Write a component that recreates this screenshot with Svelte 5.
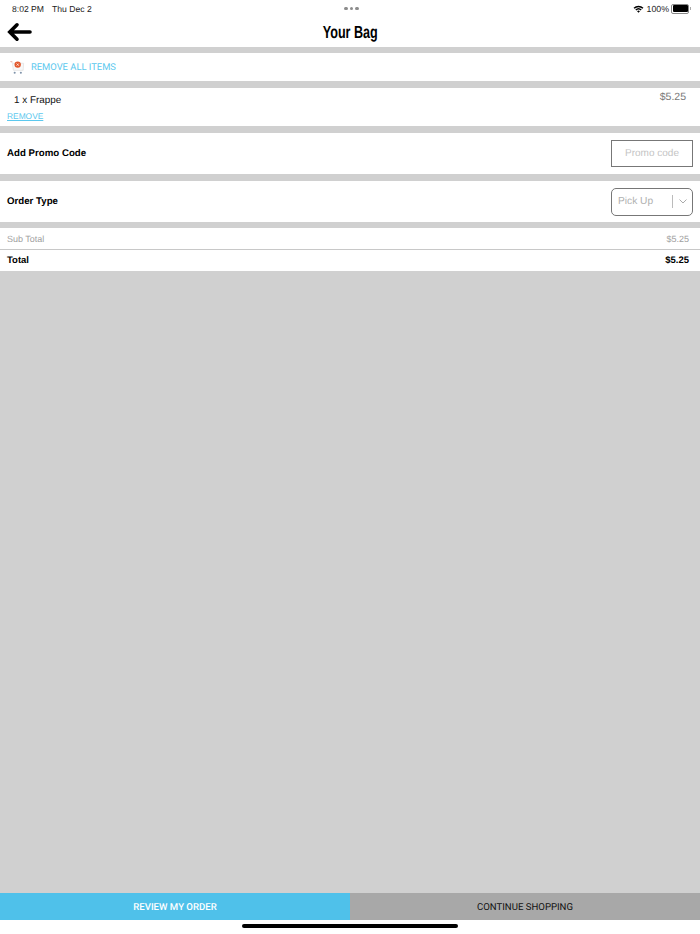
<script>
  // Bag contents
  let items = [{ qty: 1, name: 'Frappe', price: '$5.25' }];
  let subTotal = '$5.25';
  let total = '$5.25';
</script>

<div class="page">
  <div class="top">
    <div class="status">
      <div class="clock"><span>8:02 PM</span><span>Thu Dec 2</span></div>
      <div class="dots"><i></i><i></i><i></i></div>
      <div class="sys">
        <svg width="11" height="8" viewBox="0 0 12 9">
          <path d="M0.4 3 A8 8 0 0 1 11.6 3 L10.4 4.2 A6.3 6.3 0 0 0 1.6 4.2 Z" fill="#000" />
          <path d="M2.4 5 A5.2 5.2 0 0 1 9.6 5 L8.4 6.2 A3.5 3.5 0 0 0 3.6 6.2 Z" fill="#000" />
          <path d="M4.4 7 A2.3 2.3 0 0 1 7.6 7 L6 8.7 Z" fill="#000" />
        </svg>
        <span>100%</span>
        <div class="battery"><div class="fill"></div></div>
        <div class="nub"></div>
      </div>
    </div>
    <div class="nav">
      <svg class="back" width="26" height="22" viewBox="0 0 26 22">
        <path d="M11 3.8 L3.8 11 L11 18.2 M4.5 11 L24 11" fill="none" stroke="#000" stroke-width="3.6" stroke-linecap="round" stroke-linejoin="miter" />
      </svg>
      <h1>Your Bag</h1>
    </div>
  </div>

  <div class="row remove-all">
    <svg width="15" height="15" viewBox="0 0 16 15">
      <path d="M0.5 1.2 L2.6 1.6" stroke="#e0a090" stroke-width="1" fill="none" />
      <path d="M2.6 3 L14.5 3 L14 10.5 L3.6 10.5 Z" fill="#f8f8f8" stroke="#e2e2e2" stroke-width="0.8" />
      <circle cx="8.2" cy="4.4" r="3.4" fill="#e2572b" />
      <path d="M7 3.2 L9.4 5.6 M9.4 3.2 L7 5.6" stroke="#fff" stroke-width="0.8" />
      <circle cx="5" cy="13" r="1.1" fill="#7f93aa" />
      <circle cx="11.6" cy="13" r="1.1" fill="#7f93aa" />
    </svg>
    <span>REMOVE ALL ITEMS</span>
  </div>

  {#each items as item}
    <div class="row item">
      <div class="item-top">
        <span class="name">{item.qty} x {item.name}</span>
        <span class="price">{item.price}</span>
      </div>
      <span class="remove">REMOVE</span>
    </div>
  {/each}

  <div class="row field">
    <span class="label">Add Promo Code</span>
    <div class="promo">Promo code</div>
  </div>

  <div class="row field">
    <span class="label">Order Type</span>
    <div class="select">
      <span class="value">Pick Up</span>
      <span class="sep"></span>
      <svg width="8" height="5" viewBox="0 0 8 5">
        <path d="M0.5 0.5 L4 4 L7.5 0.5" fill="none" stroke="#aaa" stroke-width="1" />
      </svg>
    </div>
  </div>

  <div class="totals">
    <div class="sub"><span>Sub Total</span><span>{subTotal}</span></div>
    <div class="total"><span>Total</span><span>{total}</span></div>
  </div>

  <div class="spacer"></div>

  <div class="actions">
    <div class="btn primary">REVIEW MY ORDER</div>
    <div class="btn secondary">CONTINUE SHOPPING</div>
  </div>
  <div class="home"><div class="bar"></div></div>
</div>

<style>
  :global(body) {
    margin: 0;
    background: #fff;
  }

  .page {
    width: 700px;
    height: 934px;
    display: flex;
    flex-direction: column;
    background: #d0d0d0;
    font-family: 'Liberation Sans', Arial, sans-serif;
    text-rendering: geometricPrecision;
    overflow: hidden;
  }

  .top {
    height: 47px;
    background: #fff;
    flex: none;
  }

  .status {
    height: 17px;
    display: grid;
    grid-template-columns: 1fr auto 1fr;
    align-items: center;
    padding: 0 9px 0 12px;
    font-size: 8.6px;
    color: #222;
  }

  .clock {
    display: flex;
    gap: 8px;
  }

  .dots {
    display: flex;
    gap: 2px;
  }

  .dots i {
    width: 3.5px;
    height: 3.5px;
    border-radius: 50%;
    background: #8c8c8c;
  }

  .sys {
    display: flex;
    align-items: center;
    justify-content: flex-end;
    gap: 2px;
  }

  .sys span {
    margin-left: 1px;
    font-size: 8.8px;
  }

  .battery {
    width: 15px;
    height: 7px;
    border: 0.5px solid #888;
    border-radius: 2px;
    padding: 0.5px;
  }

  .fill {
    width: 100%;
    height: 100%;
    background: #000;
    border-radius: 1px;
  }

  .nub {
    width: 1px;
    height: 3px;
    margin-left: -1px;
    background: #aaa;
  }

  .nav {
    height: 30px;
    display: flex;
    align-items: center;
    justify-content: center;
    position: relative;
  }

  .back {
    position: absolute;
    left: 6px;
    top: 4px;
  }

  h1 {
    margin: 0;
    font-family: 'Liberation Sans', sans-serif;
    font-size: 17.5px;
    font-weight: 700;
    color: #000;
    transform: scaleX(0.72);
  }

  .row {
    background: #fff;
    flex: none;
  }

  .remove-all {
    margin-top: 6px;
    height: 28px;
    display: flex;
    align-items: center;
    gap: 6px;
    padding-left: 10px;
    color: #5cc8ee;
    font-family: Roboto, 'Liberation Sans', sans-serif;
    font-size: 9.4px;
  }

  .remove-all span {
    padding-top: 1px;
  }

  .item {
    margin-top: 7px;
    height: 38px;
    padding: 3px 14px 0 7px;
    box-sizing: border-box;
    display: flex;
    flex-direction: column;
  }

  .item-top {
    display: flex;
    justify-content: space-between;
    height: 18px;
  }

  .name {
    padding: 4px 0 0 7px;
    font-size: 9.9px;
    color: #111;
  }

  .price {
    font-size: 10.5px;
    color: #777;
  }

  .remove {
    margin-top: 2px;
    font-size: 8.4px;
    color: #5cc8ee;
    text-decoration: underline;
  }

  .field {
    margin-top: 7px;
    height: 41px;
    display: flex;
    align-items: center;
    justify-content: space-between;
    padding: 0 7px;
  }

  .label {
    font-size: 9.7px;
    font-weight: 700;
    color: #000;
  }

  .promo {
    width: 82px;
    height: 27px;
    box-sizing: border-box;
    border: 1px solid #777;
    display: flex;
    align-items: center;
    justify-content: center;
    font-size: 10px;
    color: #c4c4c4;
  }

  .select {
    width: 82px;
    height: 28px;
    box-sizing: border-box;
    border: 1px solid #777;
    border-radius: 5px;
    display: flex;
    align-items: center;
    padding-left: 6px;
    font-size: 10.2px;
    color: #b0b0b0;
  }

  .value {
    flex: 1;
  }

  .sep {
    width: 1px;
    height: 13px;
    background: #bbb;
    margin-right: 6px;
  }

  .select svg {
    margin-right: 5px;
  }

  .totals {
    margin-top: 6px;
    flex: none;
  }

  .sub,
  .total {
    background: #fff;
    display: flex;
    justify-content: space-between;
    align-items: flex-start;
    box-sizing: border-box;
    padding-left: 7px;
    padding-right: 11px;
  }

  .sub {
    height: 22px;
    padding-top: 6px;
    font-size: 9px;
    color: #a0a0a0;
    border-bottom: 1px solid #c8c8c8;
  }

  .total {
    height: 21px;
    padding-top: 5px;
    font-size: 9.5px;
    color: #000;
    font-weight: 700;
  }

  .spacer {
    flex: 1;
  }

  .actions {
    height: 27px;
    flex: none;
    display: flex;
  }

  .btn {
    flex: 1;
    display: flex;
    align-items: center;
    justify-content: center;
    padding-top: 1px;
    box-sizing: border-box;
    font-family: Roboto, 'Liberation Sans', sans-serif;
    font-size: 9.6px;
  }

  .primary {
    background: #4fc1ea;
    color: #fff;
    font-weight: 500;
  }

  .secondary {
    background: #a8a8a8;
    color: #111;
  }

  .home {
    height: 14px;
    flex: none;
    background: #fff;
    display: flex;
    justify-content: center;
    padding-top: 4px;
    box-sizing: border-box;
  }

  .bar {
    width: 216px;
    height: 4px;
    border-radius: 2px;
    background: #000;
  }
</style>
